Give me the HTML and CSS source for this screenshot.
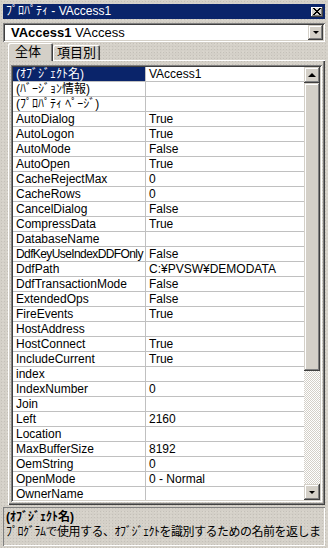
FILE: index.html
```html
<!DOCTYPE html>
<html lang="ja">
<head>
  <meta charset="UTF-8">
  <title>プロパティ - VAccess1</title>
  <link rel="stylesheet" href="styles.css">
</head>
<body>

  <div class="window">
    <div class="titlebar">
      <span class="title">ﾌﾟﾛﾊﾟﾃｨ - VAccess1</span>
      <span class="close-btn">
        <svg width="8" height="7" viewBox="0 0 8 7">
          <path d="M0 0h2v1h1v1h2v-1h1v-1h2v1h-1v1h-1v1h-1v1h1v1h1v1h1v1h-2v-1h-1v-1h-2v1h-1v1h-2v-1h1v-1h1v-1h1v-1h-1v-1h-1v-1h-1z" fill="#000"/>
        </svg>
      </span>
    </div>

    <div class="combo">
      <span class="combo-text"><b>VAccess1</b> VAccess</span>
      <span class="drop-btn"><span class="arrow-down"></span></span>
    </div>

    <div class="tabs">
      <div class="tab active">全体</div>
      <div class="tab">項目別</div>
    </div>

    <div class="panel">
      <div class="grid">
        <div class="rows">
          <div class="row selected"><div class="name">(ｵﾌﾞｼﾞｪｸﾄ名)</div><div class="value">VAccess1</div></div>
          <div class="row"><div class="name">(ﾊﾞｰｼﾞｮﾝ情報)</div><div class="value"></div></div>
          <div class="row"><div class="name">(ﾌﾟﾛﾊﾟﾃｨ ﾍﾟｰｼﾞ)</div><div class="value"></div></div>
          <div class="row"><div class="name">AutoDialog</div><div class="value">True</div></div>
          <div class="row"><div class="name">AutoLogon</div><div class="value">True</div></div>
          <div class="row"><div class="name">AutoMode</div><div class="value">False</div></div>
          <div class="row"><div class="name">AutoOpen</div><div class="value">True</div></div>
          <div class="row"><div class="name">CacheRejectMax</div><div class="value">0</div></div>
          <div class="row"><div class="name">CacheRows</div><div class="value">0</div></div>
          <div class="row"><div class="name">CancelDialog</div><div class="value">False</div></div>
          <div class="row"><div class="name">CompressData</div><div class="value">True</div></div>
          <div class="row"><div class="name">DatabaseName</div><div class="value"></div></div>
          <div class="row"><div class="name tight">DdfKeyUseIndexDDFOnly</div><div class="value">False</div></div>
          <div class="row"><div class="name">DdfPath</div><div class="value">C:¥PVSW¥DEMODATA</div></div>
          <div class="row"><div class="name">DdfTransactionMode</div><div class="value">False</div></div>
          <div class="row"><div class="name">ExtendedOps</div><div class="value">False</div></div>
          <div class="row"><div class="name">FireEvents</div><div class="value">True</div></div>
          <div class="row"><div class="name">HostAddress</div><div class="value"></div></div>
          <div class="row"><div class="name">HostConnect</div><div class="value">True</div></div>
          <div class="row"><div class="name">IncludeCurrent</div><div class="value">True</div></div>
          <div class="row"><div class="name">index</div><div class="value"></div></div>
          <div class="row"><div class="name">IndexNumber</div><div class="value">0</div></div>
          <div class="row"><div class="name">Join</div><div class="value"></div></div>
          <div class="row"><div class="name">Left</div><div class="value">2160</div></div>
          <div class="row"><div class="name">Location</div><div class="value"></div></div>
          <div class="row"><div class="name">MaxBufferSize</div><div class="value">8192</div></div>
          <div class="row"><div class="name">OemString</div><div class="value">0</div></div>
          <div class="row"><div class="name">OpenMode</div><div class="value">0 - Normal</div></div>
          <div class="row"><div class="name">OwnerName</div><div class="value"></div></div>
        </div>
        <div class="scrollbar">
          <div class="sb-btn"><span class="arrow-up"></span></div>
          <div class="sb-thumb"></div>
          <div class="sb-track"></div>
          <div class="sb-btn"><span class="arrow-down"></span></div>
        </div>
      </div>
    </div>

    <div class="desc">
      <div class="desc-title">(ｵﾌﾞｼﾞｪｸﾄ名)</div>
      <div class="desc-text">ﾌﾟﾛｸﾞﾗﾑで使用する、ｵﾌﾞｼﾞｪｸﾄを識別するための名前を返しま</div>
    </div>
  </div>

</body>
</html>
```

FILE: styles.css
```css
body {
  margin: 0;
  background-color: #d4d0c8;
  background-image: radial-gradient(#c4c0b8 0.6px, transparent 0.8px), radial-gradient(#dedad3 0.6px, transparent 0.8px);
  background-size: 3px 3px, 4px 4px;
  background-position: 0 0, 1px 2px;
  font-family: "Liberation Sans", "Noto Sans CJK JP", sans-serif;
  font-size: 12px;
  color: #000;
}

.window {
  width: 328px;
  height: 548px;
  padding-top: 4px;
  box-sizing: border-box;
  overflow: hidden;
}

/* caption */
.titlebar {
  height: 15px;
  margin: 0 3px;
  background-color: #0a246a;
  color: #fff;
  display: flex;
  align-items: center;
  justify-content: space-between;
  padding: 0 2px 0 3px;
}

.title {
  font-size: 12px;
  line-height: 15px;
}

.close-btn {
  width: 12px;
  height: 10px;
  background-color: #d4d0c8;
  box-shadow: inset -1px -1px #404040, inset 1px 1px #fff, inset -2px -2px #808080;
  display: flex;
  align-items: center;
  justify-content: center;
}

/* object combo */
.combo {
  height: 19px;
  margin: 4px 3px 0 3px;
  background-color: #fff;
  box-shadow: inset 1px 1px #808080, inset -1px -1px #fff, inset 2px 2px #404040, inset -2px -2px #d4d0c8;
  display: flex;
  align-items: center;
  justify-content: space-between;
  padding: 0 2px 0 8px;
  box-sizing: border-box;
}

.combo-text {
  font-size: 13px;
}

.drop-btn {
  width: 15px;
  height: 15px;
  background-color: #d4d0c8;
  box-shadow: inset -1px -1px #404040, inset 1px 1px #d4d0c8, inset -2px -2px #808080, inset 2px 2px #fff;
  display: flex;
  align-items: center;
  justify-content: center;
}

.arrow-down {
  width: 0;
  height: 0;
  border-left: 3px solid transparent;
  border-right: 3px solid transparent;
  border-top: 3px solid #000;
}

.arrow-up {
  width: 0;
  height: 0;
  border-left: 4px solid transparent;
  border-right: 4px solid transparent;
  border-bottom: 4px solid #000;
}

/* tabs */
.tabs {
  display: flex;
  align-items: flex-end;
  height: 17px;
  margin-top: 1px;
  padding-left: 8px;
}

.tab {
  height: 15px;
  line-height: 15px;
  width: 47px;
  box-sizing: border-box;
  text-align: center;
  font-size: 13px;
  white-space: nowrap;
  box-shadow: inset 1px 1px #fff, inset -1px 0 #404040, inset -2px 0 #808080;
  border-radius: 2px 2px 0 0;
}

.tab.active {
  height: 18px;
  width: 45px;
  margin-bottom: -1px;
  line-height: 17px;
  position: relative;
  z-index: 1;
  background-color: #d4d0c8;
  text-align: left;
  padding-left: 7px;
}

/* tab page */
.panel {
  height: 445px;
  margin: 0 3px 0 8px;
  box-sizing: border-box;
  padding: 5px 3px 3px 3px;
  box-shadow: inset 1px 1px #fff, inset -1px -1px #404040, inset -2px -2px #808080;
}

.grid {
  display: flex;
  height: 437px;
  box-sizing: border-box;
  padding: 2px;
  background-color: #fff;
  box-shadow: inset 1px 1px #808080, inset -1px -1px #fff, inset 2px 2px #404040, inset -2px -2px #d4d0c8;
}

.rows {
  flex: 1;
  overflow: hidden;
}

.row {
  display: flex;
  height: 15px;
  box-sizing: border-box;
  border-bottom: 1px solid #c0c0c0;
  line-height: 14px;
  white-space: nowrap;
}

.name {
  width: 133px;
  padding-left: 3px;
  box-sizing: border-box;
  border-right: 1px solid #c0c0c0;
  overflow: hidden;
}

.name.tight {
  letter-spacing: -0.6px;
}

.value {
  flex: 1;
  padding-left: 3px;
  overflow: hidden;
}

.row.selected .name {
  background-color: #0a246a;
  color: #fff;
}

/* scrollbar */
.scrollbar {
  width: 16px;
  display: flex;
  flex-direction: column;
}

.sb-btn {
  height: 16px;
  background-color: #d4d0c8;
  box-shadow: inset -1px -1px #404040, inset 1px 1px #d4d0c8, inset -2px -2px #808080, inset 2px 2px #fff;
  display: flex;
  align-items: center;
  justify-content: center;
}

.sb-thumb {
  height: 288px;
  background-color: #d4d0c8;
  box-shadow: inset -1px -1px #404040, inset 1px 1px #d4d0c8, inset -2px -2px #808080, inset 2px 2px #fff;
}

.sb-track {
  flex: 1;
  background-color: #fff;
  background-image: conic-gradient(#d4d0c8 25%, #fff 0 50%, #d4d0c8 0 75%, #fff 0);
  background-size: 2px 2px;
}

/* description */
.desc {
  height: 39px;
  margin: 2px 3px 0 3px;
  box-sizing: border-box;
  padding: 3px 0 0 3px;
  box-shadow: inset 1px 1px #808080, inset -1px -1px #fff;
  white-space: nowrap;
  overflow: hidden;
  line-height: 15px;
}

.desc-title {
  font-weight: bold;
}

.desc-text {
  letter-spacing: -0.5px;
}
```
